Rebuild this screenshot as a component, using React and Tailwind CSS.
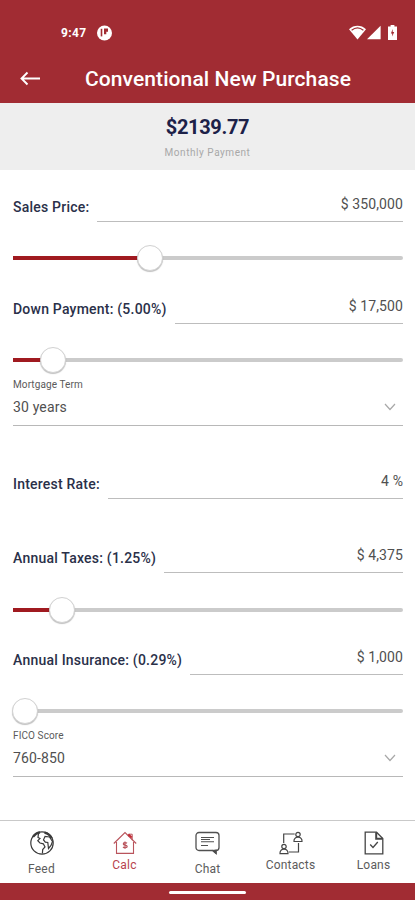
import React, { useState } from "react";

/* status bar */
function StatusBar() {
  return (
    <div className="flex h-[55px] items-end justify-between pl-[61px] pr-[18px] pb-[13px] text-white">
      <div className="flex h-[19px] items-center gap-[11px]">
        <span className="text-[12px] font-bold leading-none tracking-[0.35px]">9:47</span>
        <svg width="15" height="16" viewBox="0 0 15 16" fill="none">
          <circle cx="7.5" cy="8" r="7.5" fill="#fff" />
          <path d="M4.500 3.800v7.600" stroke="#a12c33" strokeWidth="1.600" />
          <path d="M7 3.500h4v3.200H9.300v2.500H7z" fill="#a12c33" />
        </svg>
      </div>
      <div className="flex h-[19px] items-center">
        <svg width="17" height="15" viewBox="0 0 17 15" fill="none">
          <path d="M0 4.2C4.8-.4 12.2-.4 17 4.2L8.5 14.5z" fill="#fff" />
          <path d="M2.6 5.2c3.6-2.9 8.2-2.9 11.8 0" stroke="#a12c33" strokeWidth="1.2" />
        </svg>
        <svg width="14" height="15" viewBox="0 0 14 15" className="ml-px">
          <path d="M0 14.2 13.6 .8v13.4z" fill="#fff" />
        </svg>
        <svg width="9" height="15" viewBox="0 0 9 15" className="ml-[7px]">
          <path d="M2.6 0h3.8v1.5H9V15H0V1.500h2.600z" fill="#fff" />
          <path d="M4.700 4 2.900 8.600h1.300v3L6.200 7H4.700z" fill="#a12c33" />
        </svg>
      </div>
    </div>
  );
}

function Header({ title }) {
  return (
    <div className="relative flex h-[48px] items-center justify-center">
      <button type="button" aria-label="Back" className="absolute left-[20px] top-[16px]">
        <svg width="20" height="15" viewBox="0 0 20 15" fill="none" stroke="#fff" strokeWidth="1.9">
          <path d="M20 7.500H1.500M7.500 1.500l-6 6 6 6" />
        </svg>
      </button>
      <div className="ml-[21px] whitespace-nowrap text-[21px] font-medium leading-6 tracking-[0.1px] text-white">{title}</div>
    </div>
  );
}

function FieldRow({ label, value }) {
  return (
    <div className="flex h-[34px] items-end gap-[8px]">
      <div className="h-[25px] whitespace-nowrap text-[14px] font-medium leading-[20px] tracking-[0.22px] text-[#2a3049]">{label}</div>
      <div className="h-[28px] flex-1 border-b border-[#bdbdbd] text-right text-[14px] leading-[21px] tracking-[0.1px] text-[#505050]">{value}</div>
    </div>
  );
}

function Slider({ pos }) {
  return (
    <div className="relative h-[26px]">
      <div className="absolute inset-x-0 top-[11px] h-[4px] rounded-full bg-[#cbcbcb]" />
      <div className="absolute left-0 top-[11px] h-[4px] bg-[#a01a20]" style={{ width: pos }} />
      <div
        className="absolute top-0 h-[26px] w-[26px] -translate-x-1/2 rounded-full border border-[#d2d2d2] bg-white shadow-[0_1px_1px_rgba(0,0,0,0.25)]"
        style={{ left: pos }}
      />
    </div>
  );
}

function SelectField({ label, value }) {
  return (
    <div className="flex h-[48px] flex-col border-b border-[#b8b8b8]">
      <div className="text-[10px] leading-[14px] tracking-[0.1px] text-[#5a5a5a]">{label}</div>
      <div className="flex h-[30px] items-center justify-between pr-[7px] text-[14px] leading-5 tracking-[0.15px] text-[#505050]">
        {value}
        <svg width="12" height="8" viewBox="0 0 12 8" fill="none" stroke="#a8a8a8" strokeWidth="1.2">
          <path d="m1 1 5 5.500L11 1" />
        </svg>
      </div>
    </div>
  );
}

/* tab icons */
function FeedIcon() {
  return (
    <svg width="24" height="24" viewBox="0 0 24 24" fill="none" stroke="#3a3a3a" strokeWidth="1.200">
      <circle cx="12" cy="12" r="11.200" />
      <path d="M8.500 2.500 8 6.500 10 7.500 7.800 9.700l2.200 2.300 3.300.8 1.700 3.200-2.300 2.500-.3 4" />
      <path d="m15 5.500-1.500 3.300 1.800 2.400 2.500.3.700 6 2.500-3 1.500-4-3-4.500z" />
      <path d="M3 5.800C5 3 7.500 1.700 10 1.300M14.500 1.600c3.300.7 5.800 2.700 7.200 5.700" strokeWidth="2.300" />
    </svg>
  );
}

function CalcIcon() {
  return (
    <svg width="24" height="24" viewBox="0 0 24 24" fill="none" stroke="#b9545c" strokeWidth="1.100">
      <path d="M.8 12.500 12 1.500l11.200 11M3.500 11v11.400h17V11" />
      <path d="M15.500 5.500V3.200h3.700v6" strokeWidth="1" />
      <path d="m15.500 3.500 3.200 3" stroke="#c42a35" strokeWidth="2" />
      <path d="M14 12.200c-1-.9-3.700-.8-3.700.7 0 1.700 3.900.9 3.900 2.700 0 1.500-3 1.500-4.200.4M12 10.500v7.300" strokeWidth="1.200" />
    </svg>
  );
}

function ChatIcon() {
  return (
    <svg width="25" height="24" viewBox="0 0 25 24" fill="none" stroke="#505050" strokeWidth="1.300">
      <path d="M17.500 19.500H4a3 3 0 0 1-3-3v-12a3 3 0 0 1 3-3h17a3 3 0 0 1 3 3v12a3 3 0 0 1-3 3v2.800z" />
      <path d="m18 19.500 3 2.700v-3z" fill="#333" />
      <path d="M6 6.500h13M6 8.500h9M6 10.800h13M6 14.500h7" strokeWidth="1.100" />
    </svg>
  );
}

function ContactsIcon() {
  return (
    <svg width="24" height="24" viewBox="0 0 24 24" fill="none" stroke="#454545" strokeWidth="1.200">
      <path d="M4.700 12V3h11M19.500 12v9H10" />
      <circle cx="19" cy="3.500" r="2.200" />
      <path d="M15 10.500c-.3-2.700 1.500-4.300 4-4.300s4.300 1.600 4 4.300z" />
      <circle cx="5" cy="15.500" r="2.200" />
      <path d="M1 22.700c-.3-2.800 1.500-4.500 4-4.500s4.300 1.700 4 4.500z" />
    </svg>
  );
}

function LoansIcon() {
  return (
    <svg width="20" height="24" viewBox="0 0 20 24" fill="none" stroke="#454545" strokeWidth="1.300">
      <path d="M1.200 1.200h11.300l6.300 6.300v15.300H1.200z" />
      <path d="M12.200 1.200v6.500h6.500" strokeWidth="2" />
      <path d="m6.200 13.500 2.800 3 4.800-5.500" />
    </svg>
  );
}

const tabs = [
  { name: "Feed", Icon: FeedIcon, low: true },
  { name: "Calc", Icon: CalcIcon },
  { name: "Chat", Icon: ChatIcon, low: true },
  { name: "Contacts", Icon: ContactsIcon },
  { name: "Loans", Icon: LoansIcon },
];

function TabBar({ active, onSelect }) {
  return (
    <div className="grid h-[63px] shrink-0 grid-cols-5 border-t border-[#c9c9c9] bg-white">
      {tabs.map(({ name, Icon, low }) => (
        <button key={name} type="button" onClick={() => onSelect(name)} className="flex flex-col items-center pt-[10px]">
          <Icon />
          <span
            className={`text-[12px] leading-4 tracking-[0.2px] ${low ? "mt-[6px]" : "mt-[2px]"} ${
              active === name ? "text-[#b8434d]" : "text-[#5c5c5c]"
            }`}
          >
            {name}
          </span>
        </button>
      ))}
    </div>
  );
}

export default function App() {
  const [tab, setTab] = useState("Calc");

  return (
    <div className="flex h-[900px] w-[415px] flex-col overflow-hidden bg-white font-[Roboto,sans-serif]">
      <div className="h-[103px] shrink-0 bg-[#a12c33]">
        <StatusBar />
        <Header title="Conventional New Purchase" />
      </div>

      <div className="flex h-[67px] shrink-0 flex-col items-center bg-[#eee] pt-[12px]">
        <div className="text-[20px] font-bold leading-6 tracking-[-0.35px] text-[#1c2148]">$2139.77</div>
        <div className="mt-[7px] text-[10px] leading-[14px] tracking-[0.55px] text-[#a8a8a8]">Monthly Payment</div>
      </div>

      <div className="flex-1 pl-[13px] pr-[12px] pt-[18px]">
        <FieldRow label="Sales Price:" value="$ 350,000" />
        <div className="h-[68px] pt-[23px]"><Slider pos={137} /></div>
        <FieldRow label="Down Payment: (5.00%)" value="$ 17,500" />
        <div className="h-[54px] pt-[23px]"><Slider pos={39.5} /></div>
        <SelectField label="Mortgage Term" value="30 years" />
        <div className="h-[39px]" />
        <FieldRow label="Interest Rate:" value="4 %" />
        <div className="h-[40px]" />
        <FieldRow label="Annual Taxes: (1.25%)" value="$ 4,375" />
        <div className="h-[68px] pt-[24px]"><Slider pos={49} /></div>
        <FieldRow label="Annual Insurance: (0.29%)" value="$ 1,000" />
        <div className="h-[54px] pt-[23px]"><Slider pos={11.5} /></div>
        <SelectField label="FICO Score" value="760-850" />
      </div>

      <TabBar active={tab} onSelect={setTab} />
      <div className="flex h-[17px] shrink-0 justify-center bg-[#a12c33] pt-[8px]">
        <div className="h-[3px] w-[77px] rounded-full bg-white" />
      </div>
    </div>
  );
}
